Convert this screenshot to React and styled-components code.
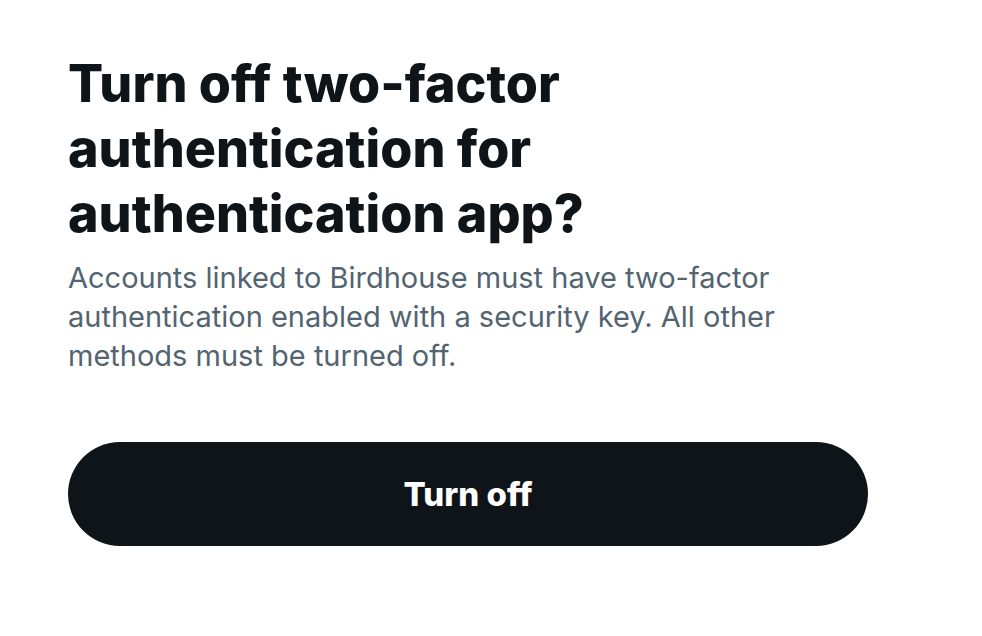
import styled, { createGlobalStyle } from "styled-components";

const GlobalStyle = createGlobalStyle`
  html, body {
    margin: 0;
    padding: 0;
    background: #ffffff;
  }
  body {
    font-family: Inter, "Noto Sans", "Liberation Sans", sans-serif;
    -webkit-font-smoothing: antialiased;
  }
`;

export default function App() {
  return (
    <>
      <GlobalStyle />
      <Page>
        <Dialog>
          <Title>Turn off two-factor authentication for authentication app?</Title>
          <Description>
            Accounts linked to Birdhouse must have two-factor authentication
            enabled with a security key. All other methods must be turned off.
          </Description>
          <PrimaryButton type="button">Turn off</PrimaryButton>
        </Dialog>
      </Page>
    </>
  );
}

const Page = styled.div`
  width: 982px;
  height: 636px;
  box-sizing: border-box;
  padding: 51px 0 0 68px;
`;

const Dialog = styled.div`
  width: 800px;
  display: flex;
  flex-direction: column;
`;

const Title = styled.h1`
  margin: 0;
  font-size: 52px;
  line-height: 65px;
  font-weight: 800;
  letter-spacing: 0;
  color: #0f1419;
`;

const Description = styled.p`
  margin: 12px 0 0;
  font-size: 29px;
  line-height: 39px;
  font-weight: 400;
  letter-spacing: 0;
  color: #536471;
`;

const PrimaryButton = styled.button`
  margin-top: 67px;
  height: 104px;
  width: 100%;
  border: none;
  border-radius: 52px;
  background: #0f1419;
  color: #ffffff;
  font-family: inherit;
  font-size: 33px;
  font-weight: 800;
  cursor: pointer;
`;
